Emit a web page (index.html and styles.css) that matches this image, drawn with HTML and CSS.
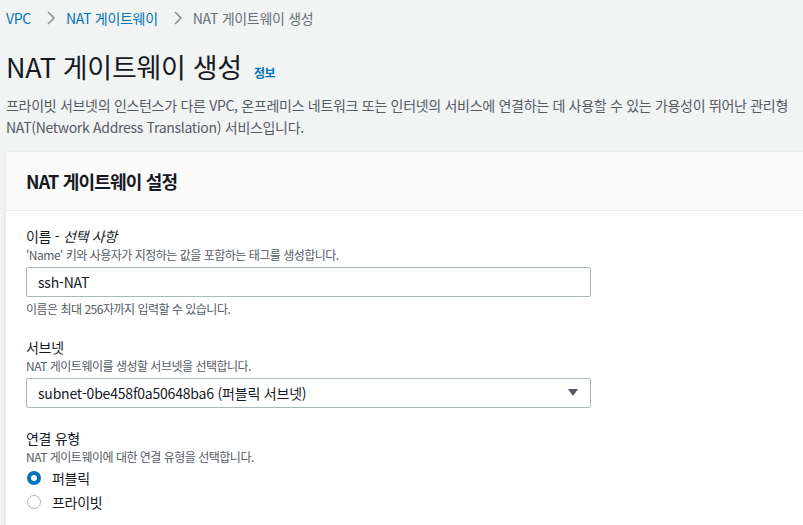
FILE: index.html
```html
<!DOCTYPE html>
<html lang="ko">
<head>
<meta charset="utf-8">
<title>NAT 게이트웨이 생성</title>
<link rel="stylesheet" href="styles.css">
</head>
<body>
    <nav class="breadcrumbs">
        <a href="#">VPC</a>
        <svg class="crumb-sep" width="16" height="16" viewBox="0 0 16 16"><path d="M5 2l6 6-6 6" fill="none" stroke="#879596" stroke-width="1.6"/></svg>
        <a href="#">NAT 게이트웨이</a>
        <svg class="crumb-sep" width="16" height="16" viewBox="0 0 16 16"><path d="M5 2l6 6-6 6" fill="none" stroke="#879596" stroke-width="1.6"/></svg>
        <span class="current">NAT 게이트웨이 생성</span>
    </nav>

    <div class="page-header">
        <h1>NAT 게이트웨이 생성</h1>
        <a href="#" class="info-link">정보</a>
    </div>
    <p class="page-desc">프라이빗 서브넷의 인스턴스가 다른 VPC, 온프레미스 네트워크 또는 인터넷의 서비스에 연결하는 데 사용할 수 있는 가용성이 뛰어난 관리형 NAT(Network Address Translation) 서비스입니다.</p>

    <div class="panel">
        <div class="panel-header">
            <h2>NAT 게이트웨이 설정</h2>
        </div>
        <div class="panel-body">
            <div class="field">
                <label class="field-label">이름 - <i>선택 사항</i></label>
                <div class="field-desc">'Name' 키와 사용자가 지정하는 값을 포함하는 태그를 생성합니다.</div>
                <input class="text-input" type="text" value="ssh-NAT">
                <div class="field-hint">이름은 최대 256자까지 입력할 수 있습니다.</div>
            </div>

            <div class="field">
                <label class="field-label">서브넷</label>
                <div class="field-desc">NAT 게이트웨이를 생성할 서브넷을 선택합니다.</div>
                <div class="select-box">
                    <span>subnet-0be458f0a50648ba6 (퍼블릭 서브넷)</span>
                    <svg width="12" height="10" viewBox="0 0 12 10"><path d="M1 1h10L6 8z" fill="#545b64"/></svg>
                </div>
            </div>

            <div class="field">
                <label class="field-label">연결 유형</label>
                <div class="field-desc">NAT 게이트웨이에 대한 연결 유형을 선택합니다.</div>
                <div class="radio-row">
                    <span class="radio checked"></span>
                    <span>퍼블릭</span>
                </div>
                <div class="radio-row">
                    <span class="radio"></span>
                    <span>프라이빗</span>
                </div>
            </div>
        </div>
    </div>
</body>
</html>
```

FILE: styles.css
```css
body {
    margin: 0;
    padding: 0 0 0 6px;
    background-color: #f2f3f3;
    color: #16191f;
    font-family: "Noto Sans CJK KR", "Noto Sans", sans-serif;
    font-size: 14px;
    letter-spacing: -0.3px;
    overflow: hidden;
}

a {
    color: #0073bb;
    text-decoration: none;
}

.breadcrumbs {
    display: flex;
    align-items: center;
    height: 36px;
    font-size: 14px;
}
.crumb-sep {
    margin: 0 7px 0 12px;
}
.breadcrumbs .current {
    color: #687078;
}

.page-header {
    display: flex;
    align-items: baseline;
    margin-top: 12px;
}
h1 {
    margin: 0;
    font-size: 27px;
    font-weight: 400;
    line-height: 38px;
    letter-spacing: -0.3px;
}
.info-link {
    margin-left: 12px;
    font-size: 12px;
    font-weight: 700;
}

.page-desc {
    margin: 8px 0 0 0;
    width: 790px;
    color: #545b64;
    font-size: 14px;
    line-height: 22px;
}

.panel {
    margin: 13px 0 0 -1px;
    background-color: white;
    border-top: 1px solid #eaeded;
    border-left: 1px solid #eaeded;
    box-shadow: 0 1px 1px rgba(0, 28, 36, 0.2);
}
.panel-header {
    background-color: #fafafa;
    border-bottom: 1px solid #eaeded;
    padding: 0 20px;
    height: 58px;
    display: flex;
    align-items: center;
}
h2 {
    margin: 0;
    font-size: 18px;
    font-weight: 700;
    letter-spacing: -0.8px;
}

.panel-body {
    padding: 14px 20px 20px 20px;
}
.field {
    margin-bottom: 19px;
}
.field-label {
    display: block;
    font-size: 14px;
    line-height: 22px;
}
.field-desc, .field-hint {
    color: #545b64;
    font-size: 12px;
    line-height: 16px;
    letter-spacing: -0.5px;
}
.field-hint {
    margin-top: 4px;
}
.text-input, .select-box {
    box-sizing: border-box;
    width: 565px;
    height: 30px;
    margin-top: 4px;
    border: 1px solid #aab7b8;
    border-radius: 2px;
    background-color: white;
    font-family: inherit;
    font-size: 14px;
    letter-spacing: -0.2px;
    color: #16191f;
    padding: 0 11px;
}
.select-box {
    display: flex;
    align-items: center;
    justify-content: space-between;
}

.radio-row {
    display: flex;
    align-items: center;
    gap: 11px;
    height: 24px;
    padding-left: 1px;
}
.field-desc + .radio-row {
    margin-top: 1px;
}
.radio {
    box-sizing: border-box;
    width: 14px;
    height: 14px;
    border-radius: 50%;
    border: 1px solid #aab7b8;
}
.radio.checked {
    border: 4px solid #0073bb;
}
```
